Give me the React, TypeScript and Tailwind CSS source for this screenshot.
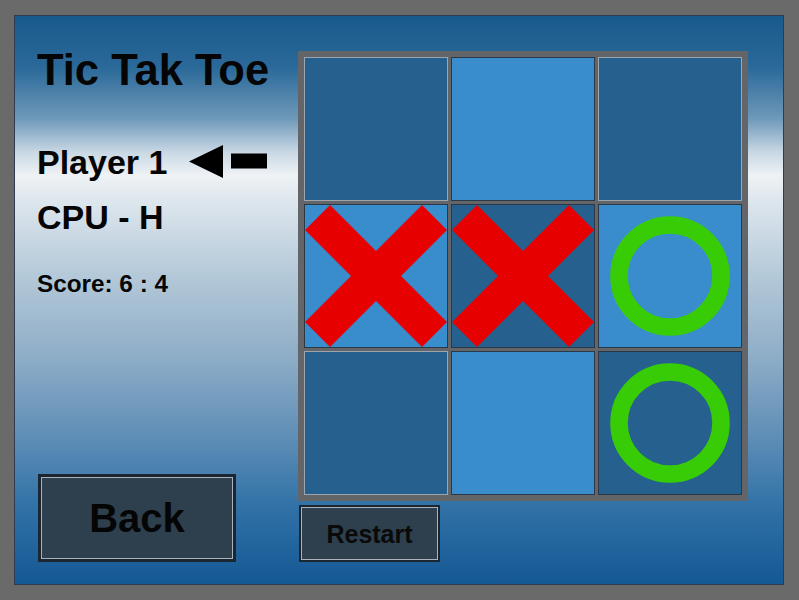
import React from "react";

type Mark = "X" | "O" | null;

const board: Mark[] = [null, null, null, "X", "X", "O", null, null, "O"];

function XMark() {
  return (
    <svg viewBox="0 0 142 142" className="w-full h-full block" preserveAspectRatio="none">
      <polygon
        points="0,25 25,0 71,46 117,0 142,25 96,71 142,117 117,142 71,96 25,142 0,117 46,71"
        fill="#e60000"
      />
    </svg>
  );
}

function OMark() {
  return (
    <svg viewBox="0 0 142 142" className="w-full h-full block">
      <circle cx="71" cy="71" r="51" fill="none" stroke="#38cc06" strokeWidth="17.5" />
    </svg>
  );
}

function Cell({ mark, index }: { mark: Mark; index: number }) {
  const row = Math.floor(index / 3);
  const col = index % 3;
  const dark = (row + col) % 2 === 0;
  const bg = dark ? "bg-[#26608f]" : "bg-[#3a8dcd]";
  const border = dark && !mark ? "border-[#9aa5ae]" : "border-[#2a3848]";
  return (
    <div className={`w-[144px] h-[144px] border ${border} ${bg} overflow-hidden`}>
      {mark === "X" && <XMark />}
      {mark === "O" && <OMark />}
    </div>
  );
}

export default function App() {
  return (
    <div
      className="w-[799px] h-[600px] bg-[#6a6a6a] pt-[15px] pl-[14px]"
      style={{ fontFamily: '"Liberation Sans", Arial, sans-serif' }}
    >
      <div className="w-[770px] h-[570px] border border-[#2d3d4d] flex bg-[linear-gradient(to_bottom,#195a8c_0%,#2a6999_9%,#6d98b9_18%,#c9d8e4_24%,#eef2f5_28%,#d9e3eb_34%,#b3c8d8_46%,#8eadc7_60%,#5f8eb6_74%,#2f70a6_87%,#145894_100%)]">
        {/* Left column */}
        <div className="w-[283px] flex flex-col">
          <div className="pl-[22px] mt-[33px] h-[43.5px] text-[43.5px] leading-[43.5px] font-bold text-[#050505] whitespace-nowrap">
            Tic Tak Toe
          </div>
          <div className="pl-[22px] mt-[52px] h-[34px] flex items-center">
            <span className="text-[34px] leading-[34px] font-bold text-[#050505] whitespace-nowrap">
              Player 1
            </span>
            <svg width="78" height="33" viewBox="0 0 78 33" className="ml-[22px] block">
              <polygon points="0,16.5 34,0 34,33" fill="#000" />
              <rect x="42" y="8.5" width="36" height="15" fill="#000" />
            </svg>
          </div>
          <div className="pl-[22px] mt-[21px] h-[34px] text-[34px] leading-[34px] font-bold text-[#050505] whitespace-nowrap">
            CPU - H
          </div>
          <div className="pl-[22px] mt-[38px] h-[24.3px] text-[24.3px] leading-[24.3px] font-bold text-[#050505] whitespace-nowrap">
            Score: 6 : 4
          </div>
          <div className="ml-[23px] mt-[178px] w-[198px] h-[88px] border-[3px] border-[#1b2631]">
            <div className="w-full h-full border border-[#aab3bb] bg-[#2e3f4d] flex items-center justify-center">
              <span className="text-[40px] leading-[40px] font-bold text-[#050505] mt-[1px]">Back</span>
            </div>
          </div>
        </div>

        {/* Right column */}
        <div className="flex flex-col">
          <div className="mt-[35px] w-[450px] h-[450px] bg-[#636568] p-[6px]">
            <div className="grid grid-cols-[144px_144px_144px] gap-[3px]">
              {board.map((m, i) => (
                <Cell key={i} mark={m} index={i} />
              ))}
            </div>
          </div>
          <div className="ml-[1px] mt-[4px] w-[141px] h-[57px] border-2 border-[#1b2631]">
            <div className="w-full h-full border border-[#aab3bb] bg-[#2e3f4d] flex items-center justify-center">
              <span className="text-[25px] leading-[25px] font-bold text-[#0a0a0a] mt-[1px]">Restart</span>
            </div>
          </div>
        </div>
      </div>
    </div>
  );
}
